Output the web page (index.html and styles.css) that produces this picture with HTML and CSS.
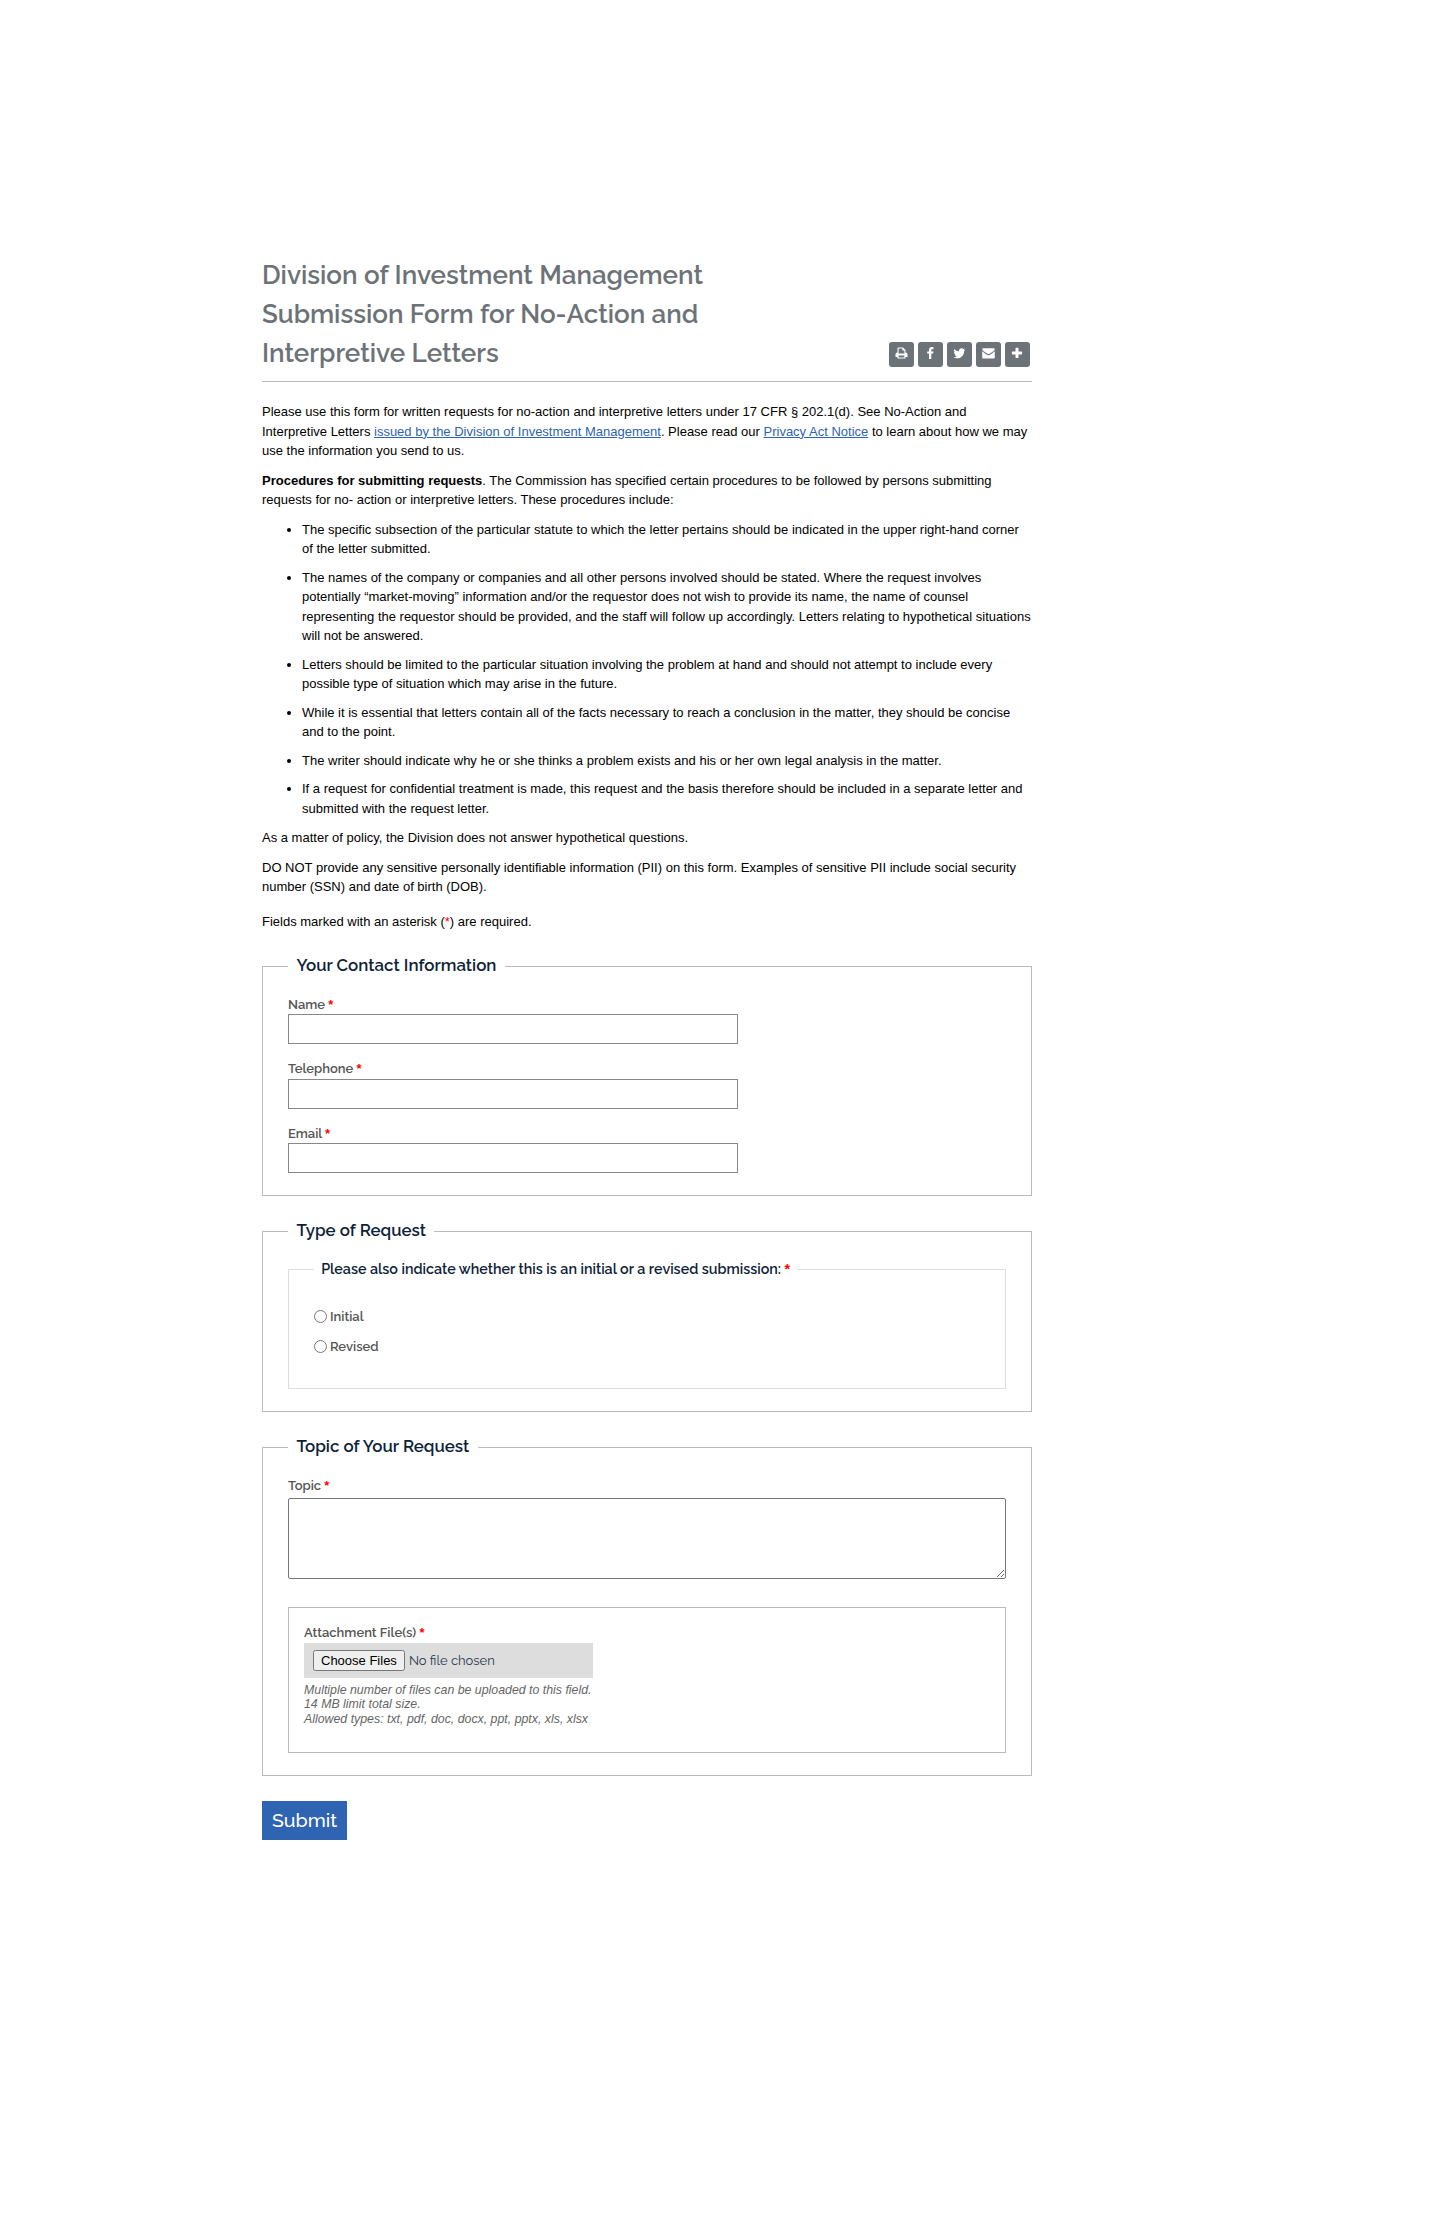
FILE: index.html
```html
<!DOCTYPE html>
<html lang="en">
<head>
<meta charset="utf-8">
<title>Submission Form for No-Action and Interpretive Letters</title>
<link rel="stylesheet" href="styles.css">
</head>
<body>
<main class="page">
  <header class="page-header">
    <h1 class="title">Division of Investment Management Submission Form for No-Action and Interpretive Letters</h1>
    <nav class="share">
      <a class="share-btn"><svg width="13" height="13" viewBox="0 0 13 13"><path fill="#fff" fill-rule="evenodd" d="M2.500 5.500V1.200Q2.500.5 3.200.5h4.800l2.500 2.500V5.500q2 0 2 1.800V10H10.500v1.500H2.500V10H.5V7.300Q.5 5.500 2.500 5.500ZM3.600 1.600V6.500h5.800V3.600H7.400v-2ZM3.600 8.500v1.900h5.800V8.500Z"/></svg></a>
      <a class="share-btn"><svg width="13" height="13" viewBox="0 0 13 13"><path fill="#fff" d="M9.500.2v2H8.300C7.500 2.200 7.300 2.600 7.300 3.200v1.300h2.200L9.200 6.600H7.300V12H5V6.600H3.200V4.500H5V2.900C5 1.100 6.100.1 7.800.1Q8.900.1 9.500.2Z"/></svg></a>
      <a class="share-btn"><svg width="13" height="13" viewBox="0 0 13 13"><path fill="#fff" d="M12.300 2.700q-.5.700-1.200 1.200c.2 3.700-2.600 7.400-7 7.400Q2.100 11.300.5 10.200q2 .1 3.400-1Q2.200 9 1.600 7.500q.6.100 1.100-.1Q.8 6.800.8 4.900q.5.300 1.100.3Q.1 3.700 1.100 1.900q2 2.400 5 2.500C5.600 2.500 7 1.200 8.500 1.200q1.100 0 1.800.8.800-.2 1.500-.6-.2.800-1 1.400Q11.600 3 12.300 2.700Z"/></svg></a>
      <a class="share-btn"><svg width="13" height="13" viewBox="0 0 13 13"><path fill="#fff" d="M1.200 1.300h10.600q1 0 1 .9-.1.900-1.100 1.700L8 6.500Q6.500 7.700 5 6.500L1.300 3.900Q.2 3 .2 2.200q0-.9 1-.9ZM.2 4.300 4.500 7.400q2 1.500 4 0l4.300-3.100v6.300q0 1-1 1H1.200q-1 0-1-1Z"/></svg></a>
      <a class="share-btn"><svg width="13" height="13" viewBox="0 0 13 13"><path fill="#fff" d="M5.200.8h1.600q.7 0 .7.700V4.400h2.900q.7 0 .7.700v1.600q0 .7-.7.700H7.500v2.900q0 .7-.7.700H5.200q-.7 0-.7-.7V7.400H1.600q-.7 0-.7-.7V5.100q0-.7.700-.7h2.900V1.500Q4.500.8 5.200.8Z"/></svg></a>
    </nav>
  </header>
  <section class="intro">
    <p>Please use this form for written requests for no-action and interpretive letters under 17 CFR § 202.1(d). See No-Action and Interpretive Letters <a class="link">issued by the Division of Investment Management</a>. Please read our <a class="link">Privacy Act Notice</a> to learn about how we may use the information you send to us.</p>
    <p><strong>Procedures for submitting requests</strong>. The Commission has specified certain procedures to be followed by persons submitting requests for no- action or interpretive letters. These procedures include:</p>
    <ul class="rules">
      <li>The specific subsection of the particular statute to which the letter pertains should be indicated in the upper right-hand corner of the letter submitted.</li>
      <li>The names of the company or companies and all other persons involved should be stated. Where the request involves potentially “market-moving” information and/or the requestor does not wish to provide its name, the name of counsel representing the requestor should be provided, and the staff will follow up accordingly. Letters relating to hypothetical situations will not be answered.</li>
      <li>Letters should be limited to the particular situation involving the problem at hand and should not attempt to include every possible type of situation which may arise in the future.</li>
      <li>While it is essential that letters contain all of the facts necessary to reach a conclusion in the matter, they should be concise and to the point.</li>
      <li>The writer should indicate why he or she thinks a problem exists and his or her own legal analysis in the matter.</li>
      <li>If a request for confidential treatment is made, this request and the basis therefore should be included in a separate letter and submitted with the request letter.</li>
    </ul>
    <p>As a matter of policy, the Division does not answer hypothetical questions.</p>
    <p>DO NOT provide any sensitive personally identifiable information (PII) on this form. Examples of sensitive PII include social security number (SSN) and date of birth (DOB).</p>
    <p class="required-note">Fields marked with an asterisk (<span class="star">*</span>) are required.</p>
  </section>
  <form class="form">
    <fieldset class="group contact">
      <legend>Your Contact Information</legend>
      <div class="field"><label for="name">Name <b class="star">*</b></label><input class="text" id="name" type="text"></div>
      <div class="field"><label for="tel">Telephone <b class="star">*</b></label><input class="text" id="tel" type="text"></div>
      <div class="field"><label for="email">Email <b class="star">*</b></label><input class="text" id="email" type="text"></div>
    </fieldset>
    <fieldset class="group request">
      <legend>Type of Request</legend>
      <fieldset class="choices">
        <legend>Please also indicate whether this is an initial or a revised submission: <b class="star">*</b></legend>
        <label class="choice"><input type="radio" name="kind">Initial</label>
        <label class="choice"><input type="radio" name="kind">Revised</label>
      </fieldset>
    </fieldset>
    <fieldset class="group topic">
      <legend>Topic of Your Request</legend>
      <label for="topic">Topic <b class="star">*</b></label>
      <textarea id="topic"></textarea>
      <div class="attach">
        <label for="files">Attachment File(s) <b class="star">*</b></label>
        <input class="files" id="files" type="file" multiple>
        <p class="hint">Multiple number of files can be uploaded to this field.<br>14 MB limit total size.<br>Allowed types: txt, pdf, doc, docx, ppt, pptx, xls, xlsx</p>
      </div>
    </fieldset>
    <button class="submit" type="button">Submit</button>
  </form>
</main>
</body>
</html>
```
FILE: styles.css
```css
* { box-sizing: border-box; }
body {
  margin: 0;
  background: #fff;
  color: #000;
  font: 13px/19.5px "Liberation Sans", Arial, sans-serif;
}
.page { width: 770px; margin: 0 0 0 262px; padding-top: 255px; }
.page-header {
  display: flex;
  justify-content: space-between;
  align-items: flex-end;
  height: 127px;
  padding-bottom: 8px;
  border-bottom: 1px solid #bbb;
}
.title {
  width: 470px;
  margin: 0;
  color: #6c7378;
  font: 600 26px/39px Raleway, Lato, sans-serif;
}
.share { display: flex; gap: 4px; padding: 0 2px 6px 0; }
.share-btn {
  display: flex;
  align-items: center;
  justify-content: center;
  width: 25px;
  height: 25px;
  padding-bottom: 2px;
  border-radius: 3px;
  background: #6c7378;
}
.intro { padding-top: 20px; }
.intro p { margin: 0 0 10px; }
.link { color: #2e64b1; text-decoration: underline; }
.rules { margin: 0 0 10px; padding-left: 40px; }
.rules li { margin-bottom: 9px; }
.intro .required-note { margin: 15px 0 0; }
.star { color: #f00; }
label, legend { font-family: Raleway, Lato, sans-serif; font-weight: 600; }
label { display: block; color: #555; font-size: 13px; }
b.star { font-family: "Liberation Sans", Arial, sans-serif; font-weight: 700; line-height: 1; }
fieldset { min-width: 0; margin: 0; }
.group { border: 1px solid #bbb; padding: 16.5px 25px 0; }
.group > legend { height: 23px; padding: 0 8.45px; color: #0f1f3a; font-size: 16.9px; line-height: 20px; }
.form { margin-top: 24px; }
.contact { height: 241px; }
.field { height: 64.5px; }
.text {
  display: block;
  width: 450px;
  height: 30px;
  border: 1px solid #888;
}
.request { height: 192px; margin-top: 24px; padding-top: 16px; }
.choices { height: 130px; padding: 22px 25px 0; border: 1px solid #ddd; }
.choices legend { height: 21px; padding: 0 7.15px; color: #0f1f3a; font-size: 14.3px; line-height: 20px; }
.choice { display: flex; align-items: center; height: 30px; }
.choice input { width: 13px; height: 13px; margin: 0 3px 2px 0; }
.topic { height: 340px; margin-top: 24px; }
textarea { display: block; width: 718px; height: 81px; margin-top: 3px; border: 1px solid #767676; border-radius: 2px; }
.attach { height: 146px; margin-top: 28px; padding: 15px; border: 1px solid #bbb; }
.files {
  display: block;
  width: 289px;
  height: 35px;
  padding: 7px 9px;
  background: #ddd;
  color: #2c3a50;
  font: 13px/19px Raleway, Lato, sans-serif;
}
.files::file-selector-button { font: 13px "Liberation Sans", Arial, sans-serif; }
.hint { margin: 5px 0 0; color: #666; font-size: 12.35px; font-style: italic; line-height: 14.6px; }
.submit {
  display: block;
  width: 85px;
  height: 39px;
  margin-top: 25px;
  padding: 0;
  border: 0;
  background: #2e64b1;
  color: #fff;
  font: 500 19.5px/39px Raleway, Lato, sans-serif;
}
```
